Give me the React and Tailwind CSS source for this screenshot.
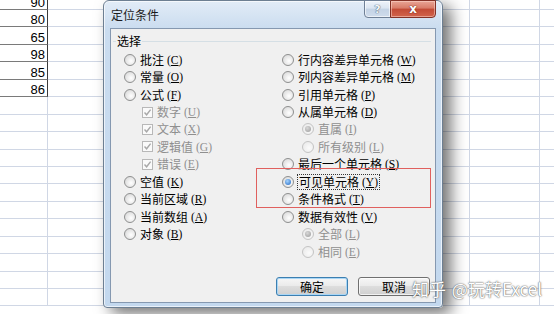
import React from "react";

const ROWS = 18;
const nums = ["90", "80", "65", "98", "85", "86"];

function Sheet() {
  const rows = [];
  for (let i = 0; i < ROWS; i++) {
    const data = i < 6;
    rows.push(
      <div key={i} className={`flex ${i === 0 ? "h-[10px]" : "h-[17.45px]"}`}>
        <div
          className={`w-[48px] shrink-0 flex items-end justify-end pr-[2px] border-b border-r ${
            data ? "border-b-[#7a7a7a] border-r-[#3a3a3a]" : "border-b-[#d0d7e5] border-r-[#d0d7e5]"
          }`}
        >
          {data && (
            <span className="font-['Liberation_Sans',sans-serif] text-[13px] leading-none text-black">{nums[i]}</span>
          )}
        </div>
        <div className="w-[422px] shrink-0 border-b border-r border-[#d0d7e5]" />
        <div className="w-[70px] shrink-0 border-b border-r border-[#d0d7e5]" />
        <div className="flex-1 border-b border-[#d0d7e5]" />
      </div>
    );
  }
  return <div className="flex flex-col">{rows}</div>;
}

function Radio({ checked, disabled }) {
  return (
    <span
      className={`w-[12px] h-[12px] shrink-0 rounded-full border flex items-center justify-center ${
        disabled
          ? "border-[#c4c4c4] bg-[radial-gradient(circle_at_60%_60%,#fbfbfb,#e6e6e6)]"
          : "border-[#8e8f8f] bg-[radial-gradient(circle_at_60%_60%,#ffffff,#d2d2d2)]"
      }`}
    >
      {checked && (
        <span
          className={`w-[6px] h-[6px] rounded-full ${
            disabled
              ? "bg-[radial-gradient(circle_at_40%_35%,#d8d8d8,#9a9a9a)]"
              : "bg-[radial-gradient(circle_at_40%_35%,#a6d4ff,#1f66c1)]"
          }`}
        />
      )}
    </span>
  );
}

function Check() {
  return (
    <span className="w-[11px] h-[11px] shrink-0 border border-[#b8b8b8] bg-[#fafafa] flex items-center justify-center">
      <svg width="9" height="9" viewBox="0 0 9 9">
        <path d="M1.5 4.5 L3.6 6.8 L7.6 1.6" fill="none" stroke="#a8a8a8" strokeWidth="1.4" />
      </svg>
    </span>
  );
}

function Item({ label, k, type = "radio", checked, disabled, indent = 0, focus }) {
  return (
    <div className={`h-[17.45px] flex items-center ${indent === 1 ? "pl-[18px]" : indent === 2 ? "pl-[20px]" : ""}`}>
      {type === "radio" ? <Radio checked={checked} disabled={disabled} /> : <Check />}
      <span
        className={`ml-[4px] flex items-center whitespace-nowrap text-[12px] leading-[14px] ${
          disabled ? "text-[#8f8f8f]" : "text-black"
        } ${focus ? "outline outline-1 outline-dotted outline-[#333] px-[1px]" : ""}`}
      >
        <span>{label}</span>
        <span className="ml-[3px] font-['Liberation_Serif',serif] text-[11.5px]">
          (<span className="underline underline-offset-1">{k}</span>)
        </span>
      </span>
    </div>
  );
}

function Button({ children, primary }) {
  return (
    <div
      className={`w-[72px] h-[19px] rounded-[3px] border flex items-center justify-center text-[12px] text-black bg-[linear-gradient(#f6f6f6,#ebebeb_45%,#dddddd_50%,#cfcfcf)] ${
        primary
          ? "border-[#3c7fb1] shadow-[inset_0_0_0_1px_#a9d6f5]"
          : "border-[#707070] shadow-[inset_0_0_0_1px_rgba(255,255,255,0.7)]"
      }`}
    >
      {children}
    </div>
  );
}

export default function App() {
  return (
    <div className="relative w-[554px] h-[314px] overflow-hidden bg-white font-['Noto_Sans_CJK_SC','Noto_Sans',sans-serif]">
      <Sheet />

      {/* dialog */}
      <div className="absolute left-[103px] top-0 w-[340px] h-[308px] rounded-t-[6px] rounded-b-[4px] border border-[#6d7f92] bg-[linear-gradient(#e2ecf7,#cadcef_28px,#c3d8ee)] shadow-[inset_0_0_0_1px_rgba(255,255,255,0.65),8px_6px_16px_rgba(0,0,0,0.55)] flex flex-col px-[6px] pb-[4px]">
        {/* title bar */}
        <div className="h-[27px] shrink-0 flex items-start">
          <span className="mt-[6px] ml-[1px] text-[12px] leading-[16px] text-[#1b1b1b]">定位条件</span>
          <div className="ml-auto flex -mt-[1px]">
            <div className="w-[27px] h-[18px] rounded-bl-[4px] border border-[#6f8096] bg-[linear-gradient(#eef3fa,#dbe5f1_45%,#c4d3e5_50%,#cfdcec)] flex items-center justify-center shadow-[inset_0_0_0_1px_rgba(255,255,255,0.6)]">
              <span className="font-['DejaVu_Sans',sans-serif] font-bold text-[11px] leading-none text-[#f4f7fb] [text-shadow:0_0_1px_#44566c,0_0_1px_#44566c]">?</span>
            </div>
            <div className="w-[46px] h-[18px] -ml-[1px] rounded-br-[4px] border border-[#833126] bg-[linear-gradient(#e9a596,#d87b68_45%,#c24a35_50%,#d2644c)] flex items-center justify-center shadow-[inset_0_0_0_1px_rgba(255,220,210,0.5)]">
              <span className="font-['DejaVu_Sans',sans-serif] font-bold text-[12px] leading-none text-white [text-shadow:0_0_1px_#6b2018,0_0_1px_#6b2018]">x</span>
            </div>
          </div>
        </div>

        {/* client area */}
        <div className="flex-1 border border-[#8598b0] bg-[#f0f0f0] flex flex-col">
          {/* group box */}
          <div className="relative mt-[12px] ml-[2px] mr-[4px] border-t border-[#d5dfe5] pt-[9px]">
            <span className="absolute left-[3px] -top-[9px] px-[1px] bg-[#f0f0f0] text-[12px] leading-[16px] text-black">选择</span>
            <div className="flex pl-[11px]">
              <div className="w-[158px] flex flex-col">
                <Item label="批注" k="C" />
                <Item label="常量" k="O" />
                <Item label="公式" k="F" />
                <Item label="数字" k="U" type="check" disabled indent={1} />
                <Item label="文本" k="X" type="check" disabled indent={1} />
                <Item label="逻辑值" k="G" type="check" disabled indent={1} />
                <Item label="错误" k="E" type="check" disabled indent={1} />
                <Item label="空值" k="K" />
                <Item label="当前区域" k="R" />
                <Item label="当前数组" k="A" />
                <Item label="对象" k="B" />
              </div>
              <div className="flex flex-col">
                <Item label="行内容差异单元格" k="W" />
                <Item label="列内容差异单元格" k="M" />
                <Item label="引用单元格" k="P" />
                <Item label="从属单元格" k="D" />
                <Item label="直属" k="I" checked disabled indent={2} />
                <Item label="所有级别" k="L" disabled indent={2} />
                <Item label="最后一个单元格" k="S" />
                <Item label="可见单元格" k="Y" checked focus />
                <Item label="条件格式" k="T" />
                <Item label="数据有效性" k="V" />
                <Item label="全部" k="L" checked disabled indent={2} />
                <Item label="相同" k="E" disabled indent={2} />
              </div>
            </div>
          </div>

          {/* buttons */}
          <div className="mt-auto mb-[6px] mr-[5px] flex justify-end gap-[10px]">
            <Button primary>确定</Button>
            <Button>取消</Button>
          </div>
        </div>
      </div>

      {/* red annotation rectangle */}
      <div className="absolute left-[256px] top-[168px] w-[175px] h-[40px] border border-[#e0605e]" />

      {/* watermark */}
      <div className="absolute left-[412px] top-[278px] text-[17px] leading-[22px] text-white whitespace-nowrap [text-shadow:0_0_1px_#555,0_0_2px_#777]">
        知乎 <span className="ml-[2px]">@玩转Excel</span>
      </div>
    </div>
  );
}
